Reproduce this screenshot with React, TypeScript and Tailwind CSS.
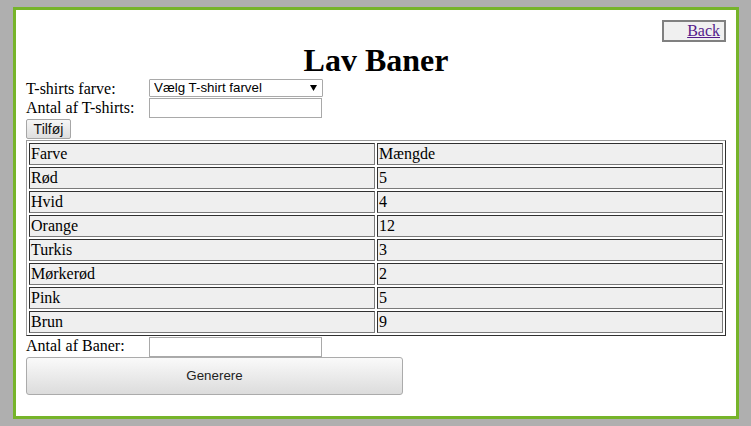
import React from "react";

const rows: [string, string][] = [
	["Rød", "5"],
	["Hvid", "4"],
	["Orange", "12"],
	["Turkis", "3"],
	["Mørkerød", "2"],
	["Pink", "5"],
	["Brun", "9"],
];

const serif = "font-['Liberation_Serif','Times_New_Roman',serif]";
const sans = "font-['Liberation_Sans',Arial,sans-serif]";

function Cell({ children }: { children: React.ReactNode }) {
	return (
		<td className="h-[22px] w-1/2 border border-solid border-t-[#303030] border-l-[#303030] border-r-[#7a7a7a] border-b-[#7a7a7a] bg-[#efefef] p-[1px] text-left align-middle text-[16px] leading-[18px] font-normal">
			{children}
		</td>
	);
}

export default function App() {
	return (
		<div className={`h-[426px] w-full overflow-hidden bg-[#afafaf] pl-[13px] pt-[7px] text-black ${serif}`}>
			<div className="h-[412px] w-[726px] border-[3px] border-[#76b42a] bg-white px-[10px] pt-[10px]">
				<div className="flex justify-end">
					<a
						href="#"
						className="flex h-[22px] w-[64px] items-center justify-end border-2 border-[#808080] bg-[#f0f0f0] pr-[4px] text-[16px] leading-[18px] text-[#551a8b] underline"
					>
						Back
					</a>
				</div>

				<h1 className="h-[37px] text-center text-[32px] leading-[37px] font-bold">Lav Baner</h1>

				<div className="grid grid-cols-[123px_1fr]">
					<div className="h-[19px] text-[16px] leading-[19px]">T-shirts farve:</div>
					<div className="relative h-[19px]">
						<select
							className={`block h-[18px] w-[174px] appearance-none rounded-[1px] border border-[#a9a9a9] bg-white pl-[4px] text-[13.33px] leading-[16px] text-black ${sans}`}
						>
							<option>Vælg T-shirt farvel</option>
						</select>
						<svg className="pointer-events-none absolute left-[161px] top-[6px]" width="7" height="6" viewBox="0 0 7 6">
							<path d="M0 0 H7 L3.5 6 Z" fill="#000" />
						</svg>
					</div>

					<div className="h-[21px] text-[16px] leading-[20px]">Antal af T-shirts:</div>
					<div className="h-[21px]">
						<input type="text" className="block h-[20px] w-[173px] border border-[#a9a9a9] bg-white outline-none" />
					</div>
				</div>

				<button
					type="button"
					className={`block h-[20px] w-[45px] rounded-[2px] border border-[#a6a6a6] bg-gradient-to-b from-[#f6f6f6] to-[#dedede] text-[14px] leading-[16px] text-[#111] ${sans}`}
				>
					Tilføj
				</button>

				<table className="mt-[1px] w-[700px] border-separate border-spacing-[2px] border border-solid border-t-[#9a9a9a] border-l-[#9a9a9a] border-r-[#303030] border-b-[#303030]">
					<thead>
						<tr>
							<Cell>Farve</Cell>
							<Cell>Mængde</Cell>
						</tr>
					</thead>
					<tbody>
						{rows.map(([farve, antal]) => (
							<tr key={farve}>
								<Cell>{farve}</Cell>
								<Cell>{antal}</Cell>
							</tr>
						))}
					</tbody>
				</table>

				<div className="grid grid-cols-[123px_1fr]">
					<div className="h-[21px] text-[16px] leading-[20px]">Antal af Baner:</div>
					<div className="h-[21px] pt-[1px]">
						<input type="text" className="block h-[20px] w-[173px] border border-[#a9a9a9] bg-white outline-none" />
					</div>
				</div>

				<button
					type="button"
					className={`block h-[38px] w-[377px] rounded-[3px] border border-[#ababab] bg-gradient-to-b from-[#fafafa] to-[#dcdcdc] text-[13.33px] text-[#222] ${sans}`}
				>
					Generere
				</button>
			</div>
		</div>
	);
}
